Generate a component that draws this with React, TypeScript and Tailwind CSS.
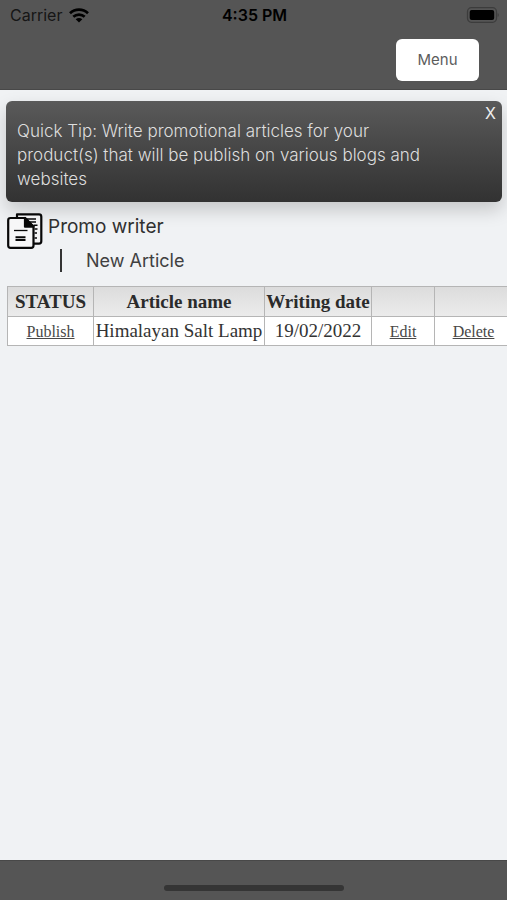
import { clsx, type ClassValue } from 'clsx';
import { twMerge } from 'tailwind-merge';

function cn(...inputs: ClassValue[]) {
    return twMerge(clsx(inputs));
}

interface Article {
    id: number;
    name: string;
    date: string;
}

const ARTICLES: Article[] = [
    { id: 1, name: 'Himalayan Salt Lamp', date: '19/02/2022' },
];

const COLUMNS = [
    { label: 'STATUS', width: 'w-[86px]' },
    { label: 'Article name', width: 'w-[171px]' },
    { label: 'Writing date', width: 'w-[107px]' },
    { label: '', width: 'w-[63px]' },
    { label: '', width: 'w-[78px]' },
];

function StatusBar() {
    return (
        <div className="grid grid-cols-3 items-center h-[30px] pl-[10px] pr-2 text-black">
            <div className="flex items-center gap-[7px]">
                <span className="text-base text-[#161616]">Carrier</span>
                <svg viewBox="0 0 20 15" className="w-5 h-[15px]" fill="none" stroke="currentColor" strokeWidth="2.7">
                    <path d="M1 5.3C6 .5 14 .5 19 5.3" />
                    <path d="M4.3 8.8C7.5 5.8 12.5 5.8 15.7 8.8" />
                    <path d="M10 14.5 6.7 11.3C8.5 9.7 11.5 9.7 13.3 11.3Z" fill="currentColor" stroke="none" />
                </svg>
            </div>
            <span className="text-center text-base font-semibold whitespace-nowrap">4:35 PM</span>
            <svg viewBox="0 0 33 16" className="w-[33px] h-4 justify-self-end">
                <rect x="1.5" y=".7" width="29" height="14.6" rx="4" fill="none" stroke="#3c3c3c" strokeWidth="1.3" />
                <rect x="3.7" y="3" width="24.5" height="10" rx="2" fill="#000" />
                <path d="M31.7 6c1.4.8 1.4 3.2 0 4z" fill="#3c3c3c" />
            </svg>
        </div>
    );
}

function ArticlesIcon() {
    return (
        <svg viewBox="0 0 36 36" className="w-9 h-9 shrink-0" fill="none" stroke="#080808" strokeWidth="2.2" strokeLinejoin="round">
            <path d="M10 1.4h22q2.3 0 2.3 2.3v24.6q0 2.3-2.3 2.3H10z" fill="#f3f3f4" />
            <path d="M20 6h9M23 9h6M26.5 12.3h4M27.5 16h3M27.5 20h2.5M27.5 25h2.5" strokeWidth="1.4" />
            <path d="M3.5 5H18L26.5 13.7v18.8q0 2.3-2.3 2.3H3.5q-2.3 0-2.3-2.3V7.3q0-2.3 2.3-2.3z" fill="#f7f7f8" />
            <path d="M18 5v8.7h8.5z" fill="#080808" />
            <path d="M7 17.5h13.5" strokeWidth="1.3" />
            <path d="M8.5 24.3h10M8.5 27h10" strokeWidth="2" />
        </svg>
    );
}

function QuickTip() {
    return (
        <div className="relative ml-[6px] mr-[5px] rounded-[6px] bg-linear-to-b from-[#5a5a5a] to-[#323232] pt-[18px] pb-[11px] pl-[11px] pr-14 shadow-[0_8px_18px_0_rgba(0,0,0,0.18)]">
            <p className="text-[17px] leading-6 font-light text-[#dedede]">
                Quick Tip: Write promotional articles for your product(s) that will be publish on various blogs and websites
            </p>
            <button type="button" aria-label="Close tip" className="absolute top-1 right-[6px] text-base leading-4 text-[#eeeeee]">
                X
            </button>
        </div>
    );
}

function ArticleTable() {
    const cell = 'border border-[#b5b5b5] p-0 text-center whitespace-nowrap';
    const link = 'text-base underline decoration-1 underline-offset-1 text-[#484848]';

    return (
        <div className="overflow-hidden pl-[7px]">
            <table className="table-fixed w-[505px] border-collapse text-[19px] leading-7 text-[#333333] font-['Liberation_Serif',serif]">
                <thead>
                    <tr className="h-[30px] bg-linear-to-b from-[#dcdcdc] to-[#ececec]">
                        {COLUMNS.map((c, i) => (
                            <th key={i} scope="col" className={cn(cell, c.width, 'font-bold text-[#2b2b2b]')}>
                                {c.label}
                            </th>
                        ))}
                    </tr>
                </thead>
                <tbody>
                    {ARTICLES.map((a) => (
                        <tr key={a.id} className="h-[29px] bg-white">
                            <td className={cell}><a href="#publish" className={link}>Publish</a></td>
                            <td className={cell}>{a.name}</td>
                            <td className={cell}>{a.date}</td>
                            <td className={cell}><a href="#edit" className={link}>Edit</a></td>
                            <td className={cell}><a href="#delete" className={link}>Delete</a></td>
                        </tr>
                    ))}
                </tbody>
            </table>
        </div>
    );
}

export default function App() {
    return (
        <div className="min-h-screen flex flex-col bg-[#f0f2f4] font-['Inter',sans-serif]">
            <header className="bg-[#555555] pb-2 border-b border-[#484848]">
                <StatusBar />
                <div className="flex justify-end pt-[9px] pr-7">
                    <button type="button" className="h-[42px] w-[83px] rounded-[6px] bg-white text-[15px] text-[#5c5c5c]">
                        Menu
                    </button>
                </div>
            </header>

            <main className="flex-1 pt-[11px]">
                <QuickTip />
                <div className="relative flex gap-[5px] pl-[7px] mt-[11px]">
                    <ArticlesIcon />
                    <h1 className="text-[19px] leading-7 text-[#303030]">Promo writer</h1>
                </div>
                <div className="flex items-center gap-6 pl-[60px] mb-[14px]">
                    <span className="w-[2px] h-[23px] bg-[#343434]" />
                    <a href="#new" className="text-lg leading-[23px] text-[#404040]">New Article</a>
                </div>
                <ArticleTable />
            </main>

            <footer className="h-10 bg-[#555555] border-t border-[#484848] flex justify-center pt-6">
                <div className="h-[6px] w-[180px] rounded-full bg-[#353535]" />
            </footer>
        </div>
    );
}
